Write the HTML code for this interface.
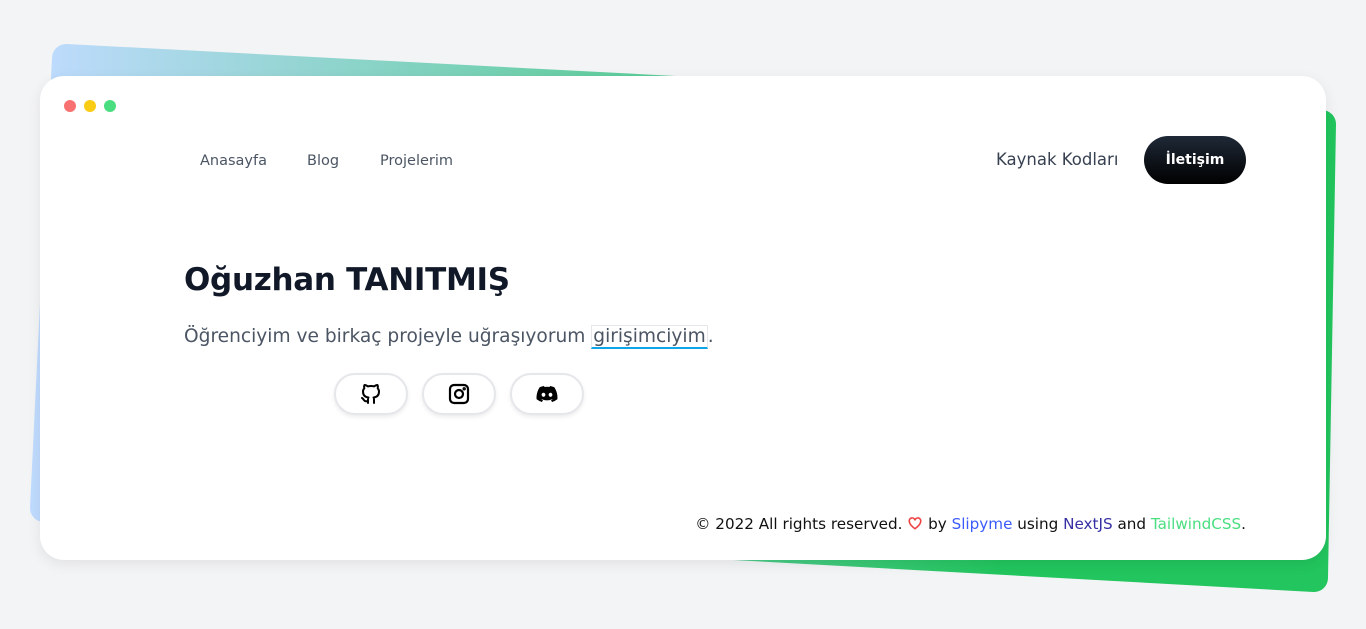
<!DOCTYPE html>
<html><head><meta charset="utf-8"><style>
*{margin:0;padding:0;box-sizing:border-box}
body{width:1366px;height:629px;background:#f3f4f6;font-family:"DejaVu Sans","Liberation Sans",sans-serif;position:relative;overflow:hidden}
svg.bg{position:absolute;left:0;top:0}
.card{position:absolute;left:40px;top:76px;width:1286px;height:484px;border-radius:24px;background:#fff;box-shadow:0 4px 14px rgba(0,0,0,.08)}
.dot{position:absolute;top:24px;width:12px;height:12px;border-radius:50%}
.nav a{position:absolute;top:77px;font-size:14.5px;color:#4b5563;text-decoration:none}
.t{position:absolute;white-space:nowrap}
.btn{position:absolute;left:1104px;top:60px;width:102px;height:48px;border-radius:24px;background:linear-gradient(#1f2937,#000);color:#fff;font-size:14px;font-weight:bold;text-align:center;line-height:48px}
.ic{position:absolute;top:297px;width:74px;height:42px;border-radius:21px;background:#fff;border:2px solid #e5e7eb;box-shadow:0 2px 4px rgba(0,0,0,.08);display:flex;align-items:center;justify-content:center}
</style></head><body>
<svg class="bg" width="1366" height="629"><defs><linearGradient id="g" gradientUnits="userSpaceOnUse" x1="40" y1="0" x2="1000" y2="0"><stop offset="0" stop-color="#bfdbfe"/><stop offset="1" stop-color="#22c55e"/></linearGradient></defs>
<polygon points="66,58 1322,124 1314,578 44,508" fill="url(#g)" stroke="url(#g)" stroke-width="28" stroke-linejoin="round"/></svg>
<div class="card">
<div class="dot" style="left:24px;background:#f87171"></div>
<div class="dot" style="left:44px;background:#facc15"></div>
<div class="dot" style="left:64px;background:#4ade80"></div>
<div class="nav"><a style="left:160px">Anasayfa</a><a style="left:267px">Blog</a><a style="left:340px">Projelerim</a></div>
<div class="t" style="left:956px;top:74px;font-size:16.5px;color:#374151">Kaynak Kodları</div>
<div class="btn">İletişim</div>
<div class="t" style="left:144px;top:186px;font-size:31px;font-weight:bold;color:#111827;letter-spacing:-0.3px">Oğuzhan TANITMIŞ</div>
<div class="t" style="left:144px;top:250px;font-size:18.6px;color:#4b5563">Öğrenciyim ve birkaç projeyle uğraşıyorum <span style="border:1px solid #e5e7eb;border-bottom:2px solid #0ea5e9;padding:0 1px">girişimciyim</span>.</div>
<div class="ic" style="left:294px"><svg width="24" height="24" viewBox="0 0 24 24" fill="none" stroke="#000" stroke-width="2" stroke-linecap="round" stroke-linejoin="round"><path d="M9 19c-4.3 1.4-4.3-2.5-6-3m12 5v-3.5c0-1 .1-1.4-.5-2 2.8-.3 5.5-1.4 5.5-6a4.6 4.6 0 0 0-1.3-3.2 4.2 4.2 0 0 0-.1-3.2s-1.1-.3-3.5 1.3a12.3 12.3 0 0 0-6.2 0C6.5 2.8 5.4 3.1 5.4 3.1a4.2 4.2 0 0 0-.1 3.2A4.6 4.6 0 0 0 4 9.5c0 4.6 2.7 5.7 5.5 6-.6.6-.6 1.2-.5 2V21"/></svg></div>
<div class="ic" style="left:382px"><svg width="24" height="24" viewBox="0 0 24 24" fill="none" stroke="#000" stroke-width="2.2"><rect x="3" y="3" width="18" height="18" rx="4"/><circle cx="12" cy="12" r="4"/><circle cx="17.2" cy="6.8" r=".6" fill="#000"/></svg></div>
<div class="ic" style="left:470px"><svg width="24" height="24" viewBox="0 0 24 24"><path fill="#000" d="M19.3 5.3A17 17 0 0 0 15 4l-.5 1a16 16 0 0 0-5 0L9 4a17 17 0 0 0-4.3 1.3C2 9.4 1.3 13.4 1.6 17.3A17 17 0 0 0 6.9 20l1.1-1.8a11 11 0 0 1-1.7-.8l.4-.3a12 12 0 0 0 10.6 0l.4.3a11 11 0 0 1-1.7.8L17.1 20a17 17 0 0 0 5.3-2.7c.4-4.6-.8-8.5-3.1-12zM8.5 14.9c-1 0-1.9-1-1.9-2.1s.8-2.1 1.9-2.1 1.9 1 1.9 2.1-.8 2.1-1.9 2.1zm7 0c-1 0-1.9-1-1.9-2.1s.8-2.1 1.9-2.1 1.9 1 1.9 2.1-.8 2.1-1.9 2.1z"/></svg></div>
<div class="t" style="right:80px;top:439px;font-size:15.2px;color:#111">© 2022 All rights reserved. <svg width="16" height="14" viewBox="0 0 24 22" style="vertical-align:-1px"><path d="M12 20S3 14 3 8a4.5 4.5 0 0 1 9-1 4.5 4.5 0 0 1 9 1c0 6-9 12-9 12z" fill="none" stroke="#ef4444" stroke-width="2.5"/></svg> by <span style="color:#3b5bfd">Slipyme</span> using <span style="color:#3730a3">NextJS</span> and <span style="color:#4ade80">TailwindCSS</span>.</div>
</div>
</body></html>
